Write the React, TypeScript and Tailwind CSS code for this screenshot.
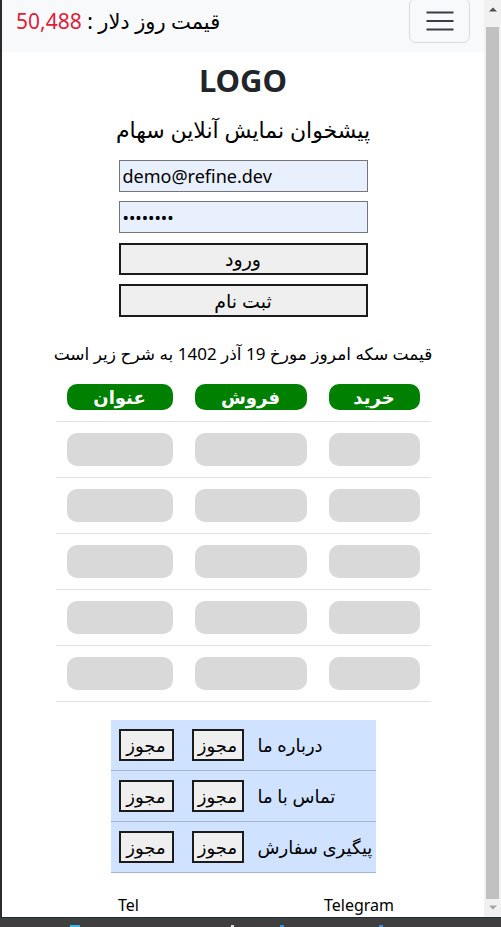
import React from "react";

const rows = [0, 1, 2, 3, 4];
const links = ["درباره ما", "تماس با ما", "پیگیری سفارش"];

function Scrollbar() {
  return (
    <div className="w-[17px] bg-[#f1f1f1] flex flex-col items-center">
      <div className="h-[27px] w-full flex items-start justify-center pt-[7px]">
        <svg width="8" height="5" viewBox="0 0 8 5">
          <path d="M0 4.5 L4 0.5 L8 4.5 Z" fill="#505050" />
        </svg>
      </div>
      <div className="flex-1 w-[13px] bg-[#c1c1c1]" />
      <div className="h-[18px] w-full flex items-start justify-center pt-[6px]">
        <svg width="8" height="5" viewBox="0 0 8 5">
          <path d="M0 0.5 L4 4.5 L8 0.5 Z" fill="#a3a3a3" />
        </svg>
      </div>
    </div>
  );
}

export default function App() {
  return (
    <div className="w-[501px] h-[927px] overflow-hidden flex flex-col bg-white font-['Noto_Sans','DejaVu_Sans',sans-serif] text-[#212529]">
      <div className="flex flex-1 min-h-0">
        <div className="w-[2px] bg-[#2b2b2b]" />
        <div className="flex-1 min-w-0 overflow-hidden">
          {/* navbar */}
          <nav className="h-[52px] bg-[#f8f9fa] flex items-start justify-between">
            <div dir="rtl" className="mt-[6px] ml-[14px] text-[21px] leading-[30px] text-black">
              قیمت روز دلار : <span className="text-[#dc1f3a]">50,488</span>
            </div>
            <button className="mt-[-2px] mr-[14px] w-[61px] h-[45px] border border-[#d9dadb] rounded-[7px] flex items-center justify-center">
              <svg width="28" height="20" viewBox="0 0 28 20">
                <path d="M0.5 1.5H27.5M0.5 10H27.5M0.5 18.5H27.5" stroke="#3b3d40" strokeWidth="2" />
              </svg>
            </button>
          </nav>

          {/* logo */}
          <div className="mt-[9px] text-center font-bold text-[31px] leading-[38px]">LOGO</div>
          <div dir="rtl" className="mt-[15px] text-center text-[22px] leading-[30px] text-black">
            پیشخوان نمایش آنلاین سهام
          </div>

          {/* form */}
          <div className="w-[249px] mx-auto mt-[16px] flex flex-col">
            <input
              readOnly
              defaultValue="demo@refine.dev"
              className="h-[32px] border border-[#767676] bg-[#e8f0fe] px-[3px] text-[18px] text-black outline-none"
            />
            <input
              readOnly
              type="password"
              defaultValue="12345678"
              className="mt-[9px] h-[32px] border border-[#767676] bg-[#e8f0fe] px-[3px] text-[17px] text-black outline-none"
            />
            <button className="mt-[10px] h-[32px] border-2 border-[#1b1b1b] bg-[#efefef] text-[19px] leading-[26px] text-black">
              ورود
            </button>
            <button className="mt-[9px] h-[33px] border-2 border-[#1b1b1b] bg-[#efefef] text-[19px] leading-[26px] text-black">
              ثبت نام
            </button>
          </div>

          {/* coin price */}
          <div dir="rtl" className="mt-[24px] text-center text-[17px] leading-[26px] text-black">
            قیمت سکه امروز مورخ 19 آذر 1402 به شرح زیر است
          </div>

          <div dir="rtl" className="w-[375px] mx-auto mt-[17px]">
            <div className="grid grid-cols-[113px_134px_128px] pb-[11px]">
              {["خرید", "فروش", "عنوان"].map((t) => (
                <div key={t} className="px-[11px]">
                  <div className="h-[26px] rounded-[10px] bg-[#008000] text-white font-bold text-[18px] leading-[26px] flex items-center justify-center">
                    {t}
                  </div>
                </div>
              ))}
            </div>
            {rows.map((r) => (
              <div key={r} className="grid grid-cols-[113px_134px_128px] border-t border-[#dee2e6] py-[11px]">
                {[0, 1, 2].map((c) => (
                  <div key={c} className="px-[11px]">
                    <div className="h-[33px] rounded-[10px] bg-[#d9d9d9]" />
                  </div>
                ))}
              </div>
            ))}
            <div className="border-t border-[#dee2e6]" />
          </div>

          {/* links */}
          <div className="w-[265px] mx-auto mt-[18px]">
            {links.map((l) => (
              <div key={l} className="h-[51px] bg-[#cfe2ff] border-b border-[#a6b5cc] flex items-center pl-[8px]">
                <button className="w-[55px] h-[32px] border-2 border-[#1b1b1b] bg-[#efefef] text-[18px] leading-[26px] text-black">
                  مجوز
                </button>
                <button className="ml-[18px] w-[52px] h-[32px] border-2 border-[#1b1b1b] bg-[#efefef] text-[18px] leading-[26px] text-black">
                  مجوز
                </button>
                <span dir="rtl" className="ml-[14px] text-[18px] leading-[26px] text-black">
                  {l}
                </span>
              </div>
            ))}
          </div>

          {/* footer */}
          <div className="mt-[20px] ml-[116px] w-[276px] flex justify-between text-[16px] leading-[24px] text-black">
            <span>Tel</span>
            <span>Telegram</span>
          </div>
        </div>
        <Scrollbar />
      </div>
      <div className="h-[10px] relative bg-[#3f3f3f] border-t border-[#1c2d36]">
        <span className="absolute bottom-0 left-[70px] w-[10px] h-[2px] bg-[#35b9e6]" />
        <span className="absolute bottom-0 left-[231px] w-[3px] h-[2px] bg-[#e0e0e0]" />
        <span className="absolute bottom-0 left-[280px] w-[4px] h-[2px] bg-[#3b8ee0]" />
        <span className="absolute bottom-0 left-[379px] w-[4px] h-[2px] bg-[#3b8ee0]" />
      </div>
    </div>
  );
}
